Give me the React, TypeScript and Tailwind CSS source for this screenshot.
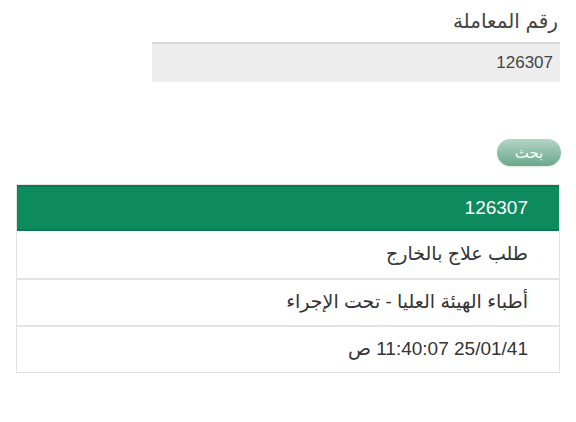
export default function App() {
  const rows = [
    'طلب علاج بالخارج',
    'أطباء الهيئة العليا - تحت الإجراء',
    '25/01/41 11:40:07 ص',
  ];
  return (
    <div
      dir="rtl"
      className="w-[576px] h-[422px] bg-white text-[#333] pt-[6px]"
      style={{ fontFamily: '"Liberation Sans", "DejaVu Sans", sans-serif' }}
    >
      <div className="pr-[18px] text-[20px] leading-[30px] text-[#444]">رقم المعاملة</div>
      <div className="mt-[6px] mr-[16px] w-[408px] h-[40px] bg-[#ededed] border-t-2 border-[#d9d9d9] flex items-center pr-[7px] text-[17px] text-[#444]">
        126307
      </div>
      <div className="mt-[57px] mr-[15px] flex">
        <button className="w-[64px] h-[27px] rounded-full bg-gradient-to-b from-[#b3d5c6] to-[#6aa88d] text-white text-[15px] leading-none shadow-[0_1px_2px_rgba(0,0,0,0.12)]">
          بحث
        </button>
      </div>
      <div className="mt-[18px] mx-[16px] border border-[#e3e3e3]">
        <div className="h-[46px] bg-[#0d8a5e] border-y-2 border-[#0a7a52] flex items-center pr-[31px] text-white text-[19px]">
          126307
        </div>
        {rows.map((r, i) => (
          <div
            key={i}
            className={`h-[47px] flex items-center pr-[31px] text-[19px] text-[#333] ${i > 0 ? 'border-t-2 border-[#e3e3e3]' : ''}`}
          >
            {r}
          </div>
        ))}
      </div>
    </div>
  );
}
